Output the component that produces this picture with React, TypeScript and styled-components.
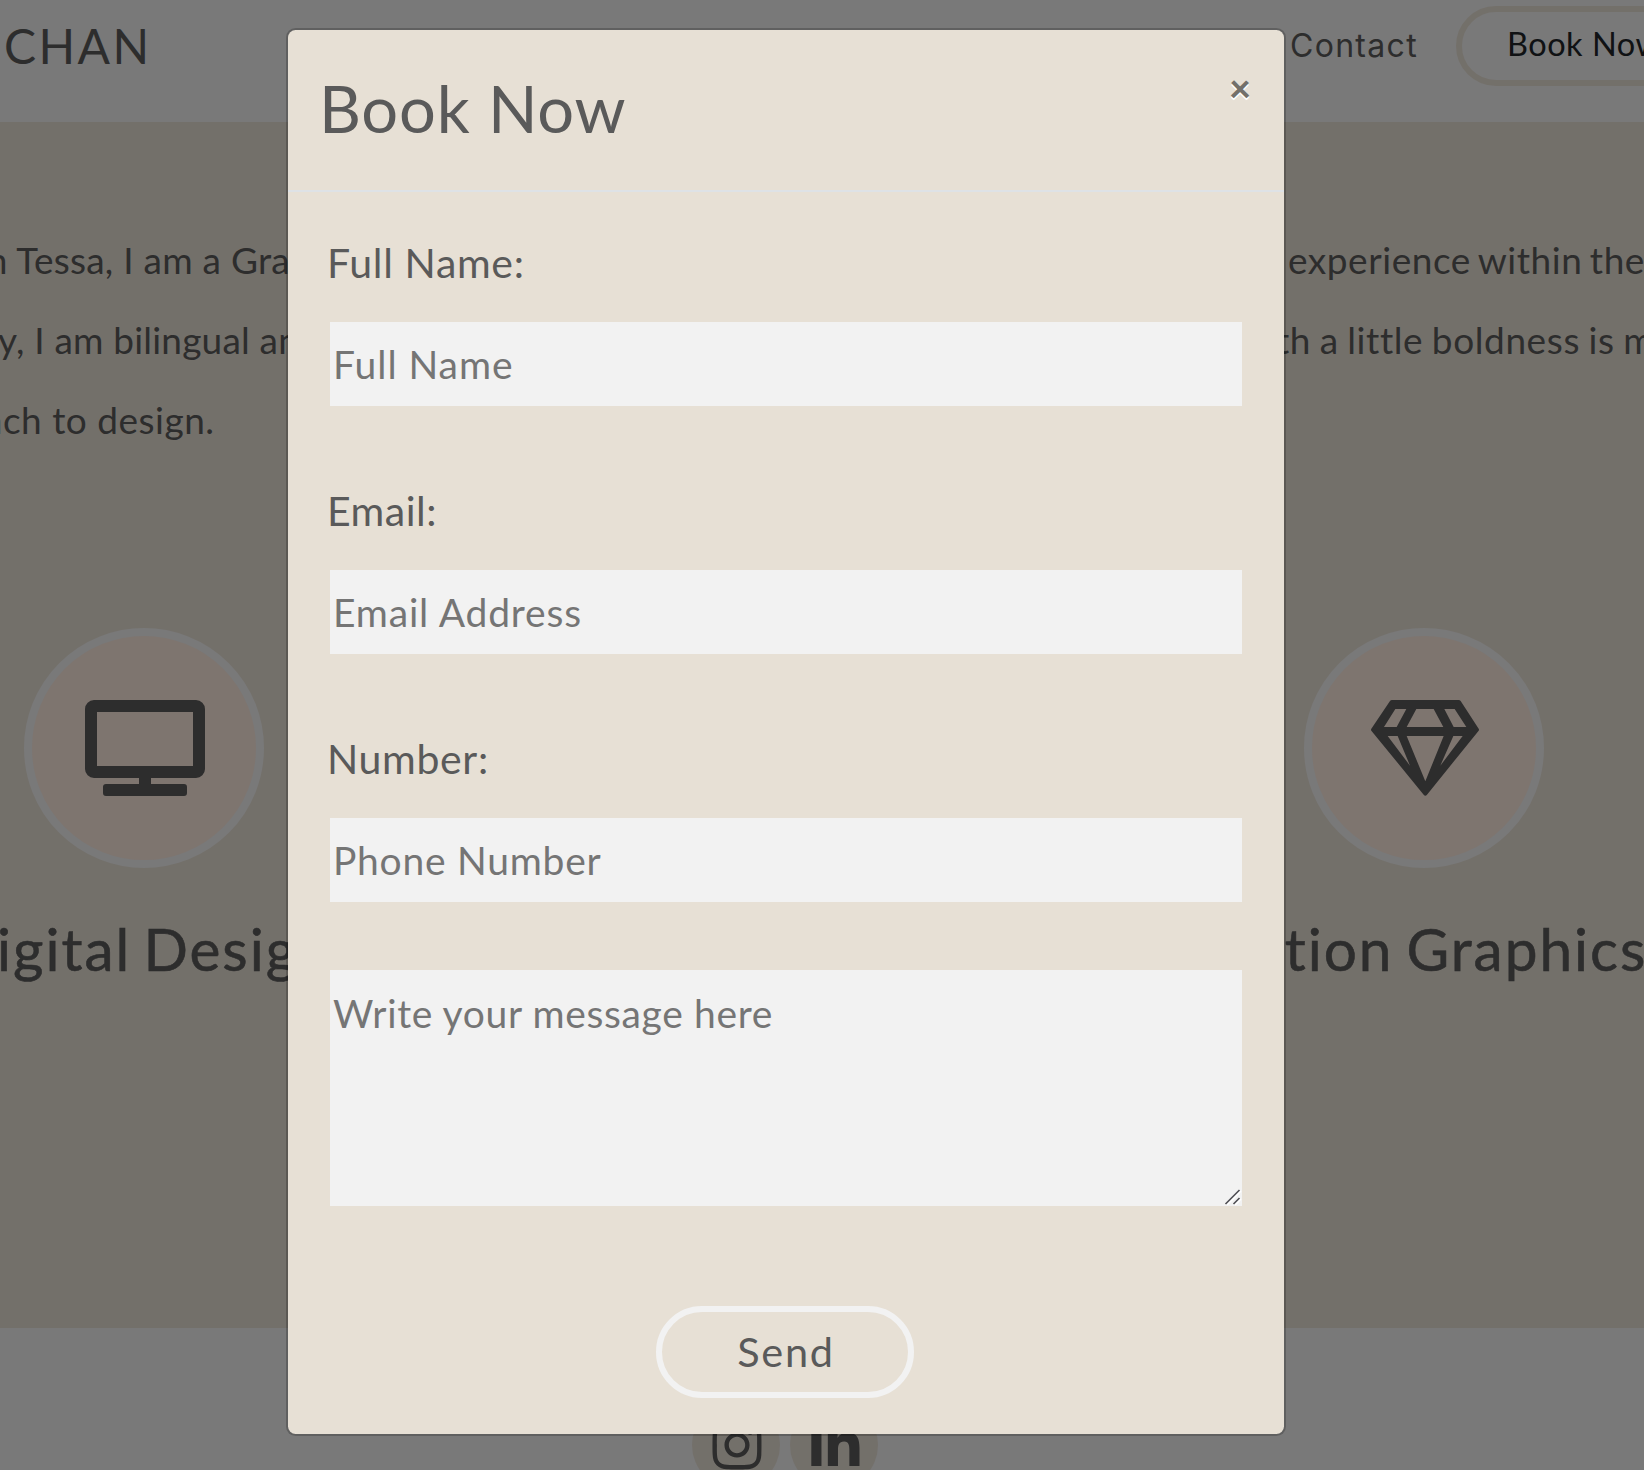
import React from "react";
import styled, { createGlobalStyle } from "styled-components";
import { FaInstagram, FaLinkedinIn } from "react-icons/fa";

const GlobalStyle = createGlobalStyle`
  * { box-sizing: border-box; }
  body { margin: 0; font-family: Lato, "Open Sans", sans-serif; color: #5a5a5a; }
`;

interface Tracking {
  $track: number;
  $words?: number;
}

const Page = styled.div`
  position: relative;
  width: 1644px;
  height: 1470px;
  overflow: hidden;
  background: #f2f2f2;
`;

const Nav = styled.nav`
  display: flex;
  align-items: flex-start;
  height: 122px;
  padding: 6px 0 0 4px;
`;

const Brand = styled.div`
  flex: 0 0 1286px;
  font-size: 48px;
  line-height: 80px;
  letter-spacing: 2.4px;
`;

const NavLink = styled.a`
  flex: 0 0 166px;
  font-family: Inter, sans-serif;
  font-size: 32px;
  line-height: 79px;
  letter-spacing: 1.3px;
`;

const NavButton = styled.button`
  flex: 0 0 248px;
  height: 80px;
  padding: 0 0 4px 45px;
  border: 6px solid #e7e0d5;
  border-radius: 40px;
  background: transparent;
  color: #212529;
  font-family: inherit;
  font-size: 32.5px;
  line-height: 64px;
  letter-spacing: 0.5px;
  text-align: left;
  white-space: nowrap;
`;

const About = styled.section`
  height: 1206px;
  padding-top: 98px;
  background: #e7e0d5;
`;

const Intro = styled.div`
  height: 240px;
`;

const IntroLine = styled.div`
  display: flex;
  height: 80px;
`;

const IntroText = styled.span<Tracking & { $width: number; $indent: number }>`
  flex: 0 0 ${(p) => p.$width}px;
  overflow: hidden;
  text-indent: ${(p) => p.$indent}px;
  font-size: 37px;
  line-height: 80px;
  letter-spacing: ${(p) => p.$track}px;
  word-spacing: ${(p) => p.$words ?? 0}px;
  white-space: nowrap;
`;

const Services = styled.div`
  display: grid;
  grid-template-columns: 640px 640px;
  column-gap: 640px;
  margin: 168px 0 0 -176px;
`;

const Service = styled.div`
  display: flex;
  flex-direction: column;
  align-items: center;
`;

const Disc = styled.div`
  display: flex;
  justify-content: center;
  width: 240px;
  height: 240px;
  padding: 64px 0 0 2px;
  border: 8px solid #f2f2f2;
  border-radius: 50%;
  background: #fceadf;
`;

const ServiceName = styled.h3<Tracking & { $shift: number }>`
  margin: 45px 0 0 ${(p) => p.$shift}px;
  font-size: 58.5px;
  font-weight: 400;
  line-height: 70px;
  letter-spacing: ${(p) => p.$track}px;
  word-spacing: ${(p) => p.$words ?? 0}px;
  white-space: nowrap;
  -webkit-text-stroke: 0.6px currentColor;
`;

const Footer = styled.footer`
  display: flex;
  gap: 10px;
  padding: 73px 0 0 692px;
`;

const Social = styled.a`
  display: flex;
  align-items: center;
  justify-content: center;
  width: 88px;
  height: 88px;
  padding-left: 1px;
  border-radius: 50%;
  background: #e7e0d5;
  font-size: 56px;
`;

const Backdrop = styled.div`
  position: absolute;
  inset: 0;
  padding: 28px 0 0 286px;
  background: rgba(0, 0, 0, 0.5);
`;

const Dialog = styled.div`
  width: 1000px;
  height: 1408px;
  border: 2px solid rgba(0, 0, 0, 0.2);
  border-radius: 9.6px;
  background: #e7e0d5;
  background-clip: padding-box;
`;

const DialogHeader = styled.header`
  display: flex;
  justify-content: space-between;
  height: 162px;
  padding: 29px 33px 0 31px;
  border-bottom: 2px solid #dee2e6;
`;

const Title = styled.h1`
  margin: 0;
  font-size: 65px;
  font-weight: 400;
  line-height: 98px;
  letter-spacing: 0.8px;
`;

const Close = styled.button`
  height: 56px;
  padding: 0;
  border: 0;
  background: transparent;
  color: #73706a;
  font-family: inherit;
  font-size: 38px;
  font-weight: 900;
  line-height: 56px;
  text-shadow: 0 2px 0 #fff;
`;

const Form = styled.form`
  display: flex;
  flex-direction: column;
  padding: 40px 42px 0;
`;

const Label = styled.label<Tracking>`
  height: 61px;
  margin: 0 0 29px -3px;
  font-size: 41px;
  line-height: 61px;
  letter-spacing: ${(p) => p.$track}px;
`;

const Input = styled.input<Tracking>`
  width: 912px;
  height: 84px;
  margin: 0 0 74px;
  padding: 0 3px 1px;
  border: 0;
  border-radius: 0;
  background: #f2f2f2;
  font-family: inherit;
  font-size: 39px;
  letter-spacing: ${(p) => p.$track}px;
  &::placeholder { color: #757575; opacity: 1; }
`;

const MessageBox = styled.div`
  position: relative;
  height: 236px;
  margin-top: -6px;
`;

const Message = styled.textarea`
  display: block;
  width: 912px;
  height: 236px;
  padding: 13px 3px;
  border: 0;
  background: #f2f2f2;
  font-family: inherit;
  font-size: 39px;
  line-height: 60px;
  letter-spacing: 0.64px;
  resize: none;
  &::placeholder { color: #757575; opacity: 1; }
`;

const Grip = styled.svg`
  position: absolute;
  right: 0;
  bottom: 0;
`;

const Send = styled.button`
  align-self: center;
  width: 258px;
  height: 92px;
  margin: 100px 2px 0 0;
  padding: 0 0 2px 2px;
  border: 6px solid #f2f2f2;
  border-radius: 46px;
  background: transparent;
  color: #5a5a5a;
  font-family: inherit;
  font-size: 41.5px;
  line-height: 78px;
  letter-spacing: 1.7px;
`;

const DisplayIcon = () => (
  <svg width="120" height="96" viewBox="0 0 120 96" fill="#5a5a5a">
    <path
      fillRule="evenodd"
      d="M9 0H111a9 9 0 0 1 9 9V69a9 9 0 0 1-9 9H66v6H99a3 3 0 0 1 3 3v6a3 3 0 0 1-3 3H21a3 3 0 0 1-3-3v-6a3 3 0 0 1 3-3H54v-6H9a9 9 0 0 1-9-9V9a9 9 0 0 1 9-9zM12 12V66H108V12z"
    />
  </svg>
);

const DiamondIcon = () => (
  <svg width="108" height="96" viewBox="393 300 324 288" fill="#5a5a5a">
    <path
      fillRule="evenodd"
      d="M456 300H656Q660 300 662 303L716 386Q718 389 716 392L561 584Q556 590 551 584L394 392Q392 389 394 386L450 303Q452 300 456 300zM466 327L432 381H470L499 327zM529 327L500 381H610L581 327zM613 327L641 381H679L644 327zM443 408L510 497L473 408zM500 408L556 544L611 408zM640 408L601 497L668 408z"
    />
  </svg>
);

const fields = [
  { id: "name", label: "Full Name:", hint: "Full Name", labelTrack: 0.65, hintTrack: 0.95 },
  { id: "email", label: "Email:", hint: "Email Address", labelTrack: 0.5, hintTrack: 0.83 },
  { id: "phone", label: "Number:", hint: "Phone Number", labelTrack: 0.65, hintTrack: 0.76 },
];

export default function App() {
  return (
    <>
      <GlobalStyle />
      <Page>
        <Nav>
          <Brand>CHAN</Brand>
          <NavLink>Contact</NavLink>
          <NavButton>Book Now</NavButton>
        </Nav>
        <About>
          <Intro>
            <IntroLine>
              <IntroText $width={1288} $indent={-23} $track={0.25}>m Tessa, I am a Gra</IntroText>
              <IntroText $width={356} $indent={0} $track={0.55} $words={-2.5}>experience within the</IntroText>
            </IntroLine>
            <IntroLine>
              <IntroText $width={1276} $indent={-2} $track={0.2}>y, I am bilingual an</IntroText>
              <IntroText $width={368} $indent={0} $track={0.6} $words={-1.5}>th a little boldness is my</IntroText>
            </IntroLine>
            <IntroLine>
              <IntroText $width={1276} $indent={-16} $track={0.5}>ach to design.</IntroText>
            </IntroLine>
          </Intro>
          <Services>
            <Service>
              <Disc><DisplayIcon /></Disc>
              <ServiceName $track={2} $words={-5} $shift={-4}>Digital Design</ServiceName>
            </Service>
            <Service>
              <Disc><DiamondIcon /></Disc>
              <ServiceName $track={2} $words={-4} $shift={-6}>Motion Graphics</ServiceName>
            </Service>
          </Services>
        </About>
        <Footer>
          <Social><FaInstagram /></Social>
          <Social><FaLinkedinIn /></Social>
        </Footer>
        <Backdrop>
          <Dialog>
            <DialogHeader>
              <Title>Book Now</Title>
              <Close>×</Close>
            </DialogHeader>
            <Form>
              {fields.map((f) => (
                <React.Fragment key={f.id}>
                  <Label htmlFor={f.id} $track={f.labelTrack}>{f.label}</Label>
                  <Input id={f.id} placeholder={f.hint} $track={f.hintTrack} />
                </React.Fragment>
              ))}
              <MessageBox>
                <Message placeholder="Write your message here" />
                <Grip width="20" height="20" viewBox="0 0 20 20" fill="none">
                  <path d="M5 19L19 5M13 19L19 13" stroke="#fff" strokeWidth="1.6" />
                  <path d="M3.5 18L17.5 4M11.5 18L17.5 12" stroke="#505055" strokeWidth="1.6" />
                </Grip>
              </MessageBox>
              <Send type="button">Send</Send>
            </Form>
          </Dialog>
        </Backdrop>
      </Page>
    </>
  );
}
